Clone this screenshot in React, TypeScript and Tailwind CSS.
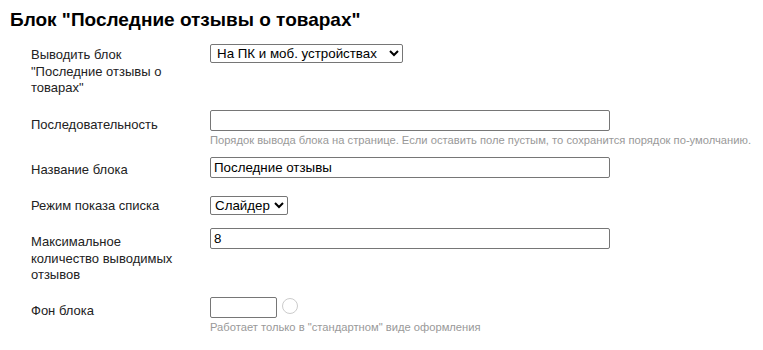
export default function App() {
    return (
        <div className="min-h-[350px] bg-white pl-[10px] pt-[9px] font-['Liberation_Sans',Arial,sans-serif] text-[#222]">
            <h3 className="text-[19px] font-bold leading-[22px] text-black">Блок "Последние отзывы о товарах"</h3>

            <div className="mt-[13px] pl-[21px] text-[13px] leading-[16.5px]">
                {/* Выводить блок */}
                <div className="flex h-[66px] items-start">
                    <div className="w-[179px] pt-[3px] pr-[20px]">Выводить блок "Последние отзывы о товарах"</div>
                    <select className="h-[19px] w-[193px] rounded-[2px] border border-[#767676] bg-white pl-[2px] text-[13.33px] text-black" defaultValue="all">
                        <option value="all">На ПК и моб. устройствах</option>
                        <option value="pc">Только на ПК</option>
                        <option value="none">Не выводить</option>
                    </select>
                </div>

                {/* Последовательность */}
                <div className="flex h-[47px] items-start">
                    <div className="w-[179px] pt-[7px]">Последовательность</div>
                    <div>
                        <input type="text" className="block h-[21px] w-[400px] rounded-[2px] border border-[#767676] bg-white px-[3px] text-[13.33px] text-black" />
                        <div className="mt-[3px] text-[11.2px] leading-[13px] text-[#999]">
                            Порядок вывода блока на странице. Если оставить поле пустым, то сохранится порядок по-умолчанию.
                        </div>
                    </div>
                </div>

                {/* Название блока */}
                <div className="flex h-[39px] items-start">
                    <div className="w-[179px] pt-[5px]">Название блока</div>
                    <input type="text" defaultValue="Последние отзывы" className="block h-[21px] w-[400px] rounded-[2px] border border-[#767676] bg-white px-[3px] text-[13.33px] text-black" />
                </div>

                {/* Режим показа */}
                <div className="flex h-[32px] items-start">
                    <div className="w-[179px] pt-[2px]">Режим показа списка</div>
                    <select className="h-[19px] w-[78px] rounded-[2px] border border-[#767676] bg-white px-0 text-[13.33px] text-black" defaultValue="slider">
                        <option value="slider">Слайдер</option>
                        <option value="list">Список</option>
                    </select>
                </div>

                {/* Максимальное количество */}
                <div className="flex h-[69px] items-start">
                    <div className="w-[179px] pt-[6px] pr-[20px]">Максимальное количество выводимых отзывов</div>
                    <input type="text" defaultValue="8" className="block h-[21px] w-[400px] rounded-[2px] border border-[#767676] bg-white px-[3px] text-[13.33px] text-black" />
                </div>

                {/* Фон блока */}
                <div className="flex items-start">
                    <div className="w-[179px] pt-[6px]">Фон блока</div>
                    <div>
                        <div className="flex items-center gap-[5px]">
                            <input type="text" className="block h-[21px] w-[67px] rounded-[2px] border border-[#767676] bg-white px-[3px] text-[13.33px]" />
                            <span className="mt-[-4px] block h-[16px] w-[16px] rounded-full border border-[#ccc]" />
                        </div>
                        <div className="mt-[3px] text-[11.2px] leading-[13px] text-[#999]">Работает только в "стандартном" виде оформления</div>
                    </div>
                </div>
            </div>
        </div>
    );
}
